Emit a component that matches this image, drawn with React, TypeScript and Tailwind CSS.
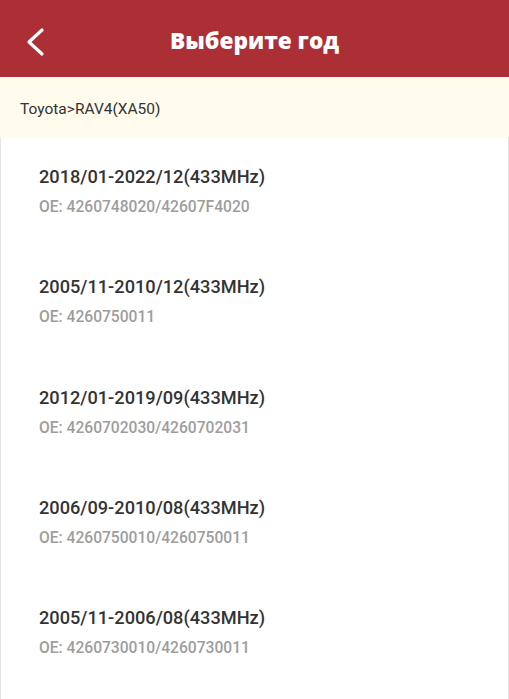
import React from "react";

const items = [
  { t: "2018/01-2022/12(433MHz)", s: "OE: 4260748020/42607F4020" },
  { t: "2005/11-2010/12(433MHz)", s: "OE: 4260750011" },
  { t: "2012/01-2019/09(433MHz)", s: "OE: 4260702030/4260702031" },
  { t: "2006/09-2010/08(433MHz)", s: "OE: 4260750010/4260750011" },
  { t: "2005/11-2006/08(433MHz)", s: "OE: 4260730010/4260730011" },
];

export default function App() {
  return (
    <div className="w-[509px] h-[699px] overflow-hidden bg-white flex flex-col" style={{ fontFamily: "Roboto, 'Noto Sans', sans-serif" }}>
      <div className="h-[77px] bg-[#ad2f36] relative flex items-center justify-center shrink-0">
        <svg className="absolute left-[24px] top-[27px]" width="24" height="30" viewBox="0 0 24 30" fill="none">
          <path d="M18 3 L5 15 L18 27" stroke="white" strokeWidth="3.2" strokeLinecap="round" strokeLinejoin="round" />
        </svg>
        <span className="text-white text-[22.6px] font-extrabold mt-[4px]" style={{ fontFamily: "'Open Sans', sans-serif" }}>Выберите год</span>
      </div>
      <div className="h-[60px] bg-[#fffcee] flex items-center pl-[20px] shrink-0">
        <span className="text-[15.5px] text-[#333333] mt-[5px]">Toyota&gt;RAV4(XA50)</span>
      </div>
      <div className="flex-1 border-x border-[#e6e6e6]">
        {items.map((it) => (
          <div key={it.t} className="h-[110.3px] pl-[38px] pt-[27px]">
            <div className="text-[18.2px] leading-[26px] font-medium text-[#333333]">{it.t}</div>
            <div className="text-[15.6px] leading-[20px] font-medium text-[#9d9d9d] mt-[7px]">{it.s}</div>
          </div>
        ))}
      </div>
    </div>
  );
}
